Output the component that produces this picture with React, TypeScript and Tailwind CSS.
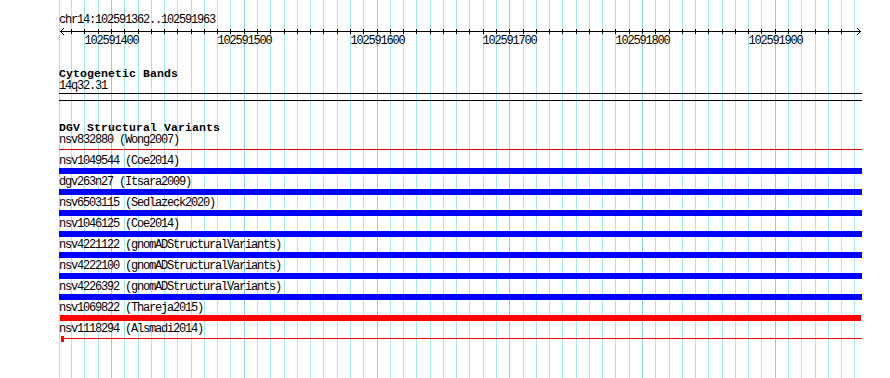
const LEFT = 59;
const TRACK_W = 803;

// grid positions, one per 10bp
const gridX = (i: number) => (i === 0 ? 59 : Math.round(111 + (i - 4) * 13.275));
const GRID = Array.from({ length: 61 }, (_, i) => i);
const MAJOR = [
  { i: 4, label: "102591400" },
  { i: 14, label: "102591500" },
  { i: 24, label: "102591600" },
  { i: 34, label: "102591700" },
  { i: 44, label: "102591800" },
  { i: 54, label: "102591900" },
];

type Kind = "thin" | "blue" | "red" | "thinStart";

const variants: { name: string; kind: Kind }[] = [
  { name: "nsv832880 (Wong2007)", kind: "thin" },
  { name: "nsv1049544 (Coe2014)", kind: "blue" },
  { name: "dgv263n27 (Itsara2009)", kind: "blue" },
  { name: "nsv6503115 (Sedlazeck2020)", kind: "blue" },
  { name: "nsv1046125 (Coe2014)", kind: "blue" },
  { name: "nsv4221122 (gnomADStructuralVariants)", kind: "blue" },
  { name: "nsv4222100 (gnomADStructuralVariants)", kind: "blue" },
  { name: "nsv4226392 (gnomADStructuralVariants)", kind: "blue" },
  { name: "nsv1069822 (Thareja2015)", kind: "red" },
  { name: "nsv1118294 (Alsmadi2014)", kind: "thinStart" },
];

const mono = "font-['Liberation_Mono',monospace] text-[12px] leading-[13px] tracking-[-1.2px] text-black";
const monoBold = "font-['Liberation_Mono',monospace] font-bold text-[11.5px] leading-[13px] tracking-[0.1px] text-black";

function Grid() {
  return (
    <svg className="absolute inset-0" width={890} height={378}>
      {GRID.map((i) => (
        <rect
          key={i}
          x={gridX(i)}
          y={0}
          width={1}
          height={378}
          fill={i % 10 === 4 ? "#8ccbe6" : "#a8e6ee"}
        />
      ))}
    </svg>
  );
}

function Ruler() {
  return (
    <svg width={TRACK_W + 2} height={19} className="block">
      <line x1={1} y1={4.5} x2={802} y2={4.5} stroke="black" />
      <polyline points="5,1 1.5,4.5 5,8" fill="none" stroke="black" />
      <polyline points="798,1 801.5,4.5 798,8" fill="none" stroke="black" />
      {GRID.slice(1, 60).map((i) => (
        <line
          key={i}
          x1={gridX(i) - LEFT + 0.5}
          y1={2}
          x2={gridX(i) - LEFT + 0.5}
          y2={7}
          stroke="black"
        />
      ))}
      {MAJOR.map((m) => (
        <text
          key={m.i}
          x={gridX(m.i) - LEFT + 0.5}
          y={16.5}
          textAnchor="middle"
          fontFamily="Liberation Mono, monospace"
          fontSize={12}
          letterSpacing={-1.2}
          fill="black"
        >
          {m.label}
        </text>
      ))}
    </svg>
  );
}

function Glyph({ kind }: { kind: Kind }) {
  if (kind === "blue") return <div className="h-[6px] w-[803px] bg-[#0000ff]" />;
  if (kind === "red") return <div className="h-[6px] w-[801px] ml-[1px] bg-[#ff0000]" />;
  if (kind === "thin")
    return (
      <div className="h-[6px] pt-[2px]">
        <div className="h-px w-[803px] bg-[#dd0000]" />
      </div>
    );
  return (
    <div className="flex h-[6px] pl-[2px]">
      <div className="w-[3px] h-[6px] bg-[#ff0000]" />
      <div className="h-px w-[798px] mt-[2px] bg-[#ff0000]" />
    </div>
  );
}

export default function App() {
  return (
    <div className="relative w-[890px] h-[378px] bg-white overflow-hidden">
      <Grid />
      <div className="relative pl-[59px] pt-[14px]">
        <div className={mono}>chr14:102591362..102591963</div>
        <Ruler />

        <div className={`${monoBold} mt-[21px]`}>Cytogenetic Bands</div>
        <div className={mono}>14q32.31</div>
        <div className="w-[803px] h-[8px] border-y border-black" />

        <div className={`${monoBold} mt-[20px]`}>DGV Structural Variants</div>
        {variants.map((v) => (
          <div key={v.name} className="mb-[2px]">
            <div className={`${mono} whitespace-pre`}>{v.name}</div>
            <Glyph kind={v.kind} />
          </div>
        ))}
      </div>
    </div>
  );
}
